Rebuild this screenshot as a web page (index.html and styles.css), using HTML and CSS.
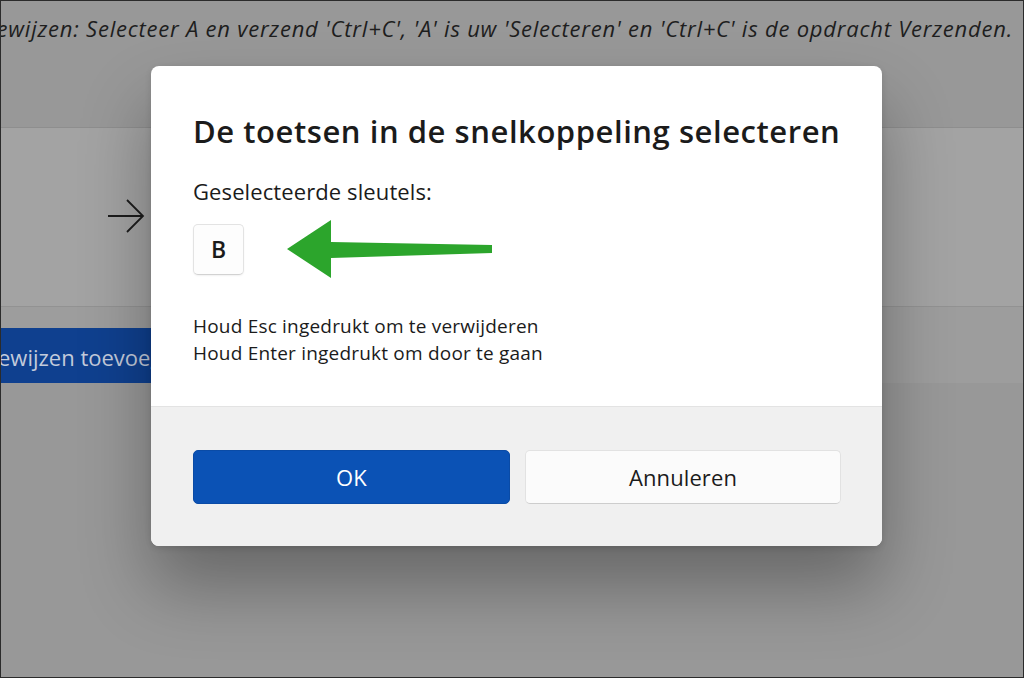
FILE: index.html
```html
<!DOCTYPE html>
<html lang="nl">
<head>
<meta charset="utf-8">
<title>De toetsen in de snelkoppeling selecteren</title>
<link rel="stylesheet" href="styles.css">
</head>
<body>
<div class="frame">
  <div class="caption">
    <p class="caption-text">Snelkoppelingen toewijzen: Selecteer A en verzend 'Ctrl+C', 'A' is uw 'Selecteren' en 'Ctrl+C' is de opdracht Verzenden.</p>
  </div>
  <div class="band">
    <svg class="band-arrow" width="37" height="34" viewBox="0 0 37 34" aria-hidden="true">
      <path d="M0 17 H35 M19 1 L35 17 L19 33" fill="none" stroke="#1c1c1c" stroke-width="1.8"/>
    </svg>
  </div>
  <div class="actions">
    <div class="add-button">ewijzen toevoegen</div>
  </div>

  <div class="dialog" role="dialog">
    <div class="dialog-body">
      <h1 class="dialog-title">De toetsen in de snelkoppeling selecteren</h1>
      <p class="label">Geselecteerde sleutels:</p>
      <div class="key-row">
        <div class="key">B</div>
        <svg class="green-arrow" width="206" height="60" viewBox="0 0 206 60" aria-hidden="true">
          <polygon points="0,30 44,1 44,23 205,26 205,34 44,39 44,59" fill="#2ca52c"/>
        </svg>
      </div>
      <p class="hint">Houd Esc ingedrukt om te verwijderen<br>Houd Enter ingedrukt om door te gaan</p>
    </div>
    <div class="dialog-footer">
      <button class="btn btn-primary">OK</button>
      <button class="btn btn-secondary">Annuleren</button>
    </div>
  </div>
</div>
</body>
</html>
```
FILE: styles.css
```css
* { box-sizing: border-box; }
html, body { margin: 0; padding: 0; }
body {
  font-family: "Open Sans", "Noto Sans", "Liberation Sans", sans-serif;
  background: #989898;
}
.frame {
  position: relative;
  width: 1024px;
  height: 678px;
  border: 1px solid #2b2b2b;
  background: #989898;
  overflow: hidden;
}
.caption {
  height: 126px;
  display: flex;
  justify-content: flex-end;
  overflow: hidden;
  padding-right: 10px;
}
.caption-text {
  margin: 11px 0 0;
  white-space: nowrap;
  font-style: italic;
  font-size: 22px;
  line-height: 32px;
  color: #1e1e1e;
  letter-spacing: 0.78px;
}
.band {
  height: 180px;
  background: #a3a3a3;
  border-top: 1px solid #8e8e8e;
  border-bottom: 1px solid #929292;
  padding: 71px 0 0 107px;
}
.band-arrow { display: block; }
.actions {
  background: #9d9d9d;
  padding-top: 21px;
}
.add-button {
  width: 230px;
  height: 55px;
  background: #0f408f;
  color: #c3cbdb;
  font-size: 22px;
  line-height: 58px;
  margin-left: -3px;
  white-space: nowrap;
  overflow: hidden;
}
.dialog {
  position: absolute;
  left: 150px;
  top: 65px;
  width: 731px;
  height: 480px;
  background: #ffffff;
  border-radius: 8px;
  overflow: hidden;
  display: flex;
  flex-direction: column;
  box-shadow: 0 40px 70px rgba(0, 0, 0, 0.32), 0 2px 6px rgba(0, 0, 0, 0.12);
}
.dialog-body {
  flex: 0 0 340px;
  padding: 45px 42px 0;
}
.dialog-title {
  margin: 0;
  font-size: 31px;
  line-height: 40px;
  font-weight: 600;
  color: #1b1b1b;
  letter-spacing: 0.55px;
  white-space: nowrap;
}
.label {
  margin: 26px 0 0;
  font-size: 22px;
  line-height: 28px;
  color: #1b1b1b;
  letter-spacing: 0.1px;
}
.key-row {
  display: flex;
  align-items: center;
  gap: 43px;
  margin-top: 14px;
}
.key {
  width: 51px;
  height: 51px;
  border: 1px solid #e3e3e3;
  border-bottom-color: #d2d2d2;
  border-radius: 5px;
  background: #fdfdfd;
  display: flex;
  align-items: center;
  justify-content: center;
  font-size: 23px;
  font-weight: 600;
  color: #1b1b1b;
  box-shadow: 0 1px 2px rgba(0, 0, 0, 0.06);
}
.green-arrow { display: block; }
.hint {
  margin: 34px 0 0;
  font-size: 19px;
  line-height: 27px;
  color: #1b1b1b;
  letter-spacing: 0.2px;
}
.dialog-footer {
  flex: 1;
  background: #f0f0f0;
  border-top: 1px solid #e3e3e3;
  display: flex;
  gap: 15px;
  padding: 43px 41px 0 42px;
}
.btn {
  width: 317px;
  height: 54px;
  border-radius: 5px;
  font-family: inherit;
  font-size: 22px;
  letter-spacing: 0.1px;
  cursor: pointer;
}
.btn-primary {
  background: #0b52b5;
  border: 1px solid #0a4ba6;
  color: #ffffff;
}
.btn-secondary {
  width: 316px;
  background: #fbfbfb;
  border: 1px solid #e2e2e2;
  border-bottom-color: #cdcdcd;
  color: #1b1b1b;
}
```
